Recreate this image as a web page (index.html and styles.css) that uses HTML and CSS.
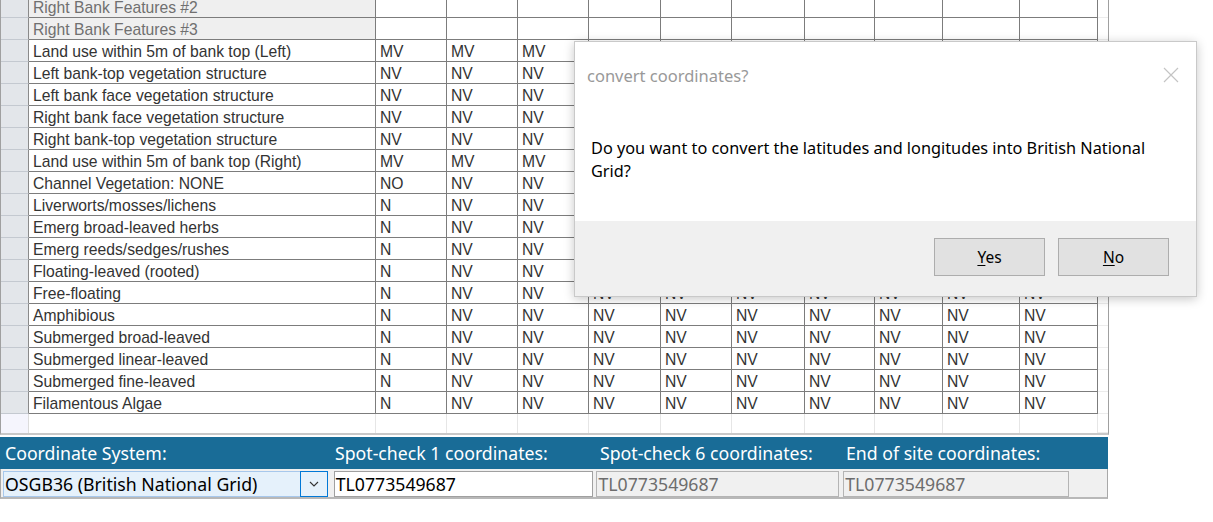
FILE: index.html
```html
<!DOCTYPE html>
<html>
<head>
<meta charset="utf-8">
<link rel="stylesheet" href="styles.css">
</head>
<body>
<div class="page">
  <div class="grid">
    <div class="row sub"><div class="rh"></div><div class="lbl">Right Bank Features #2</div><div class="c"></div><div class="c"></div><div class="c"></div><div class="c"></div><div class="c"></div><div class="c"></div><div class="c"></div><div class="c"></div><div class="c"></div><div class="c"></div><div class="f"></div></div>
    <div class="row sub"><div class="rh"></div><div class="lbl">Right Bank Features #3</div><div class="c"></div><div class="c"></div><div class="c"></div><div class="c"></div><div class="c"></div><div class="c"></div><div class="c"></div><div class="c"></div><div class="c"></div><div class="c"></div><div class="f"></div></div>
    <div class="row"><div class="rh"></div><div class="lbl">Land use within 5m of bank top (Left)</div><div class="c">MV</div><div class="c">MV</div><div class="c">MV</div><div class="c">MV</div><div class="c">MV</div><div class="c">MV</div><div class="c">MV</div><div class="c">MV</div><div class="c">MV</div><div class="c">MV</div><div class="f"></div></div>
    <div class="row"><div class="rh"></div><div class="lbl">Left bank-top vegetation structure</div><div class="c">NV</div><div class="c">NV</div><div class="c">NV</div><div class="c">NV</div><div class="c">NV</div><div class="c">NV</div><div class="c">NV</div><div class="c">NV</div><div class="c">NV</div><div class="c">NV</div><div class="f"></div></div>
    <div class="row"><div class="rh"></div><div class="lbl">Left bank face vegetation structure</div><div class="c">NV</div><div class="c">NV</div><div class="c">NV</div><div class="c">NV</div><div class="c">NV</div><div class="c">NV</div><div class="c">NV</div><div class="c">NV</div><div class="c">NV</div><div class="c">NV</div><div class="f"></div></div>
    <div class="row"><div class="rh"></div><div class="lbl">Right bank face vegetation structure</div><div class="c">NV</div><div class="c">NV</div><div class="c">NV</div><div class="c">NV</div><div class="c">NV</div><div class="c">NV</div><div class="c">NV</div><div class="c">NV</div><div class="c">NV</div><div class="c">NV</div><div class="f"></div></div>
    <div class="row"><div class="rh"></div><div class="lbl">Right bank-top vegetation structure</div><div class="c">NV</div><div class="c">NV</div><div class="c">NV</div><div class="c">NV</div><div class="c">NV</div><div class="c">NV</div><div class="c">NV</div><div class="c">NV</div><div class="c">NV</div><div class="c">NV</div><div class="f"></div></div>
    <div class="row"><div class="rh"></div><div class="lbl">Land use within 5m of bank top (Right)</div><div class="c">MV</div><div class="c">MV</div><div class="c">MV</div><div class="c">MV</div><div class="c">MV</div><div class="c">MV</div><div class="c">MV</div><div class="c">MV</div><div class="c">MV</div><div class="c">MV</div><div class="f"></div></div>
    <div class="row"><div class="rh"></div><div class="lbl">Channel Vegetation: NONE</div><div class="c">NO</div><div class="c">NV</div><div class="c">NV</div><div class="c">NV</div><div class="c">NV</div><div class="c">NV</div><div class="c">NV</div><div class="c">NV</div><div class="c">NV</div><div class="c">NV</div><div class="f"></div></div>
    <div class="row"><div class="rh"></div><div class="lbl">Liverworts/mosses/lichens</div><div class="c">N</div><div class="c">NV</div><div class="c">NV</div><div class="c">NV</div><div class="c">NV</div><div class="c">NV</div><div class="c">NV</div><div class="c">NV</div><div class="c">NV</div><div class="c">NV</div><div class="f"></div></div>
    <div class="row"><div class="rh"></div><div class="lbl">Emerg broad-leaved herbs</div><div class="c">N</div><div class="c">NV</div><div class="c">NV</div><div class="c">NV</div><div class="c">NV</div><div class="c">NV</div><div class="c">NV</div><div class="c">NV</div><div class="c">NV</div><div class="c">NV</div><div class="f"></div></div>
    <div class="row"><div class="rh"></div><div class="lbl">Emerg reeds/sedges/rushes</div><div class="c">N</div><div class="c">NV</div><div class="c">NV</div><div class="c">NV</div><div class="c">NV</div><div class="c">NV</div><div class="c">NV</div><div class="c">NV</div><div class="c">NV</div><div class="c">NV</div><div class="f"></div></div>
    <div class="row"><div class="rh"></div><div class="lbl">Floating-leaved (rooted)</div><div class="c">N</div><div class="c">NV</div><div class="c">NV</div><div class="c">NV</div><div class="c">NV</div><div class="c">NV</div><div class="c">NV</div><div class="c">NV</div><div class="c">NV</div><div class="c">NV</div><div class="f"></div></div>
    <div class="row"><div class="rh"></div><div class="lbl">Free-floating</div><div class="c">N</div><div class="c">NV</div><div class="c">NV</div><div class="c">NV</div><div class="c">NV</div><div class="c">NV</div><div class="c">NV</div><div class="c">NV</div><div class="c">NV</div><div class="c">NV</div><div class="f"></div></div>
    <div class="row"><div class="rh"></div><div class="lbl">Amphibious</div><div class="c">N</div><div class="c">NV</div><div class="c">NV</div><div class="c">NV</div><div class="c">NV</div><div class="c">NV</div><div class="c">NV</div><div class="c">NV</div><div class="c">NV</div><div class="c">NV</div><div class="f"></div></div>
    <div class="row"><div class="rh"></div><div class="lbl">Submerged broad-leaved</div><div class="c">N</div><div class="c">NV</div><div class="c">NV</div><div class="c">NV</div><div class="c">NV</div><div class="c">NV</div><div class="c">NV</div><div class="c">NV</div><div class="c">NV</div><div class="c">NV</div><div class="f"></div></div>
    <div class="row"><div class="rh"></div><div class="lbl">Submerged linear-leaved</div><div class="c">N</div><div class="c">NV</div><div class="c">NV</div><div class="c">NV</div><div class="c">NV</div><div class="c">NV</div><div class="c">NV</div><div class="c">NV</div><div class="c">NV</div><div class="c">NV</div><div class="f"></div></div>
    <div class="row"><div class="rh"></div><div class="lbl">Submerged fine-leaved</div><div class="c">N</div><div class="c">NV</div><div class="c">NV</div><div class="c">NV</div><div class="c">NV</div><div class="c">NV</div><div class="c">NV</div><div class="c">NV</div><div class="c">NV</div><div class="c">NV</div><div class="f"></div></div>
    <div class="row"><div class="rh"></div><div class="lbl">Filamentous Algae</div><div class="c">N</div><div class="c">NV</div><div class="c">NV</div><div class="c">NV</div><div class="c">NV</div><div class="c">NV</div><div class="c">NV</div><div class="c">NV</div><div class="c">NV</div><div class="c">NV</div><div class="f"></div></div>
    <div class="row newrow"><div class="rh"></div><div class="lbl"></div><div class="c"></div><div class="c"></div><div class="c"></div><div class="c"></div><div class="c"></div><div class="c"></div><div class="c"></div><div class="c"></div><div class="c"></div><div class="c"></div><div class="f"></div></div>
  </div>

  <div class="coords">
    <div class="chead">
      <div class="ch ch1">Coordinate System:</div>
      <div class="ch ch2">Spot-check 1 coordinates:</div>
      <div class="ch ch3">Spot-check 6 coordinates:</div>
      <div class="ch ch4">End of site coordinates:</div>
    </div>
    <div class="cbody">
      <div class="cc ch1">
        <div class="combo"><span class="combo-text">OSGB36 (British National Grid)</span><span class="combo-btn"><svg width="10" height="6" viewBox="0 0 10 6"><path d="M1 1 L5 5 L9 1" fill="none" stroke="#333" stroke-width="1.1"/></svg></span></div>
      </div>
      <div class="cc ch2"><div class="inp active">TL0773549687</div></div>
      <div class="cc ch3"><div class="inp">TL0773549687</div></div>
      <div class="cc ch4"><div class="inp">TL0773549687</div></div>
    </div>
  </div>

  <div class="dialog">
    <div class="dtitle"><span>convert coordinates?</span><svg class="dclose" width="16" height="16" viewBox="0 0 16 16"><path d="M1 1 L15 15 M15 1 L1 15" stroke="#c4c4c4" stroke-width="1.2" fill="none"/></svg></div>
    <div class="dbody">Do you want to convert the latitudes and longitudes into British National Grid?</div>
    <div class="dfoot">
      <div class="btn"><u>Y</u>es</div>
      <div class="btn"><u>N</u>o</div>
    </div>
  </div>
</div>
</body>
</html>
```

FILE: styles.css
```css
html, body {
  margin: 0;
  padding: 0;
  background: #ffffff;
  overflow: hidden;
}
.page {
  position: relative;
  width: 1213px;
  height: 522px;
  overflow: hidden;
}
.grid {
  margin-top: -4px;
  width: 1107px;
  border-left: 1px solid #a0a0a0;
  border-right: 1px solid #a0a0a0;
  border-bottom: 2px solid #c8c8c8;
  font-family: "Liberation Sans", Arial, sans-serif;
  font-size: 15.7px;
  color: #333333;
}
.row {
  display: grid;
  grid-template-columns: 28px 347px 71px 71px 71px 72px 71px 73px 70px 68px 77px 78px 1fr;
  height: 22px;
}
.row > div {
  box-sizing: border-box;
  height: 22px;
  border-bottom: 1px solid #7c7c7c;
  border-right: 1px solid #7c7c7c;
  line-height: 21px;
  padding-top: 1px;
  padding-left: 4px;
  white-space: nowrap;
  overflow: hidden;
}
.row > .rh {
  background: #e3e6ea;
  border-bottom: 1px solid #c4c9d0;
  border-right: 1px solid #8a8a8a;
  padding: 0;
}
.row > .f {
  border-right: none;
  border-bottom: 1px solid #ececec;
}
.row.sub > .lbl {
  background: #efefef;
  color: #707070;
}
.row.newrow {
  height: 19px;
}
.newrow > div {
  height: 19px;
  border-bottom: none;
  border-right: 1px solid #e6e6e6;
}
.newrow > .rh {
  background: #f5f5fd;
  border-right: 1px solid #dcdcdc;
  border-bottom: none;
}
.coords {
  margin-top: 2px;
  width: 1108px;
  font-family: "Noto Sans", "Open Sans", sans-serif;
  font-size: 17.7px;
}
.chead {
  display: flex;
  height: 32px;
  background: #196c97;
  color: #ffffff;
  align-items: center;
}
.ch1 { width: 330px; }
.ch2 { width: 265px; }
.ch3 { width: 246px; }
.ch4 { width: 267px; }
.ch {
  box-sizing: border-box;
  padding-left: 5px;
  line-height: 32px;
  white-space: nowrap;
}
.cbody {
  display: flex;
  height: 30px;
  background: #f0f0f0;
  border-left: 1px solid #a8a8a8;
  border-right: 1px solid #a8a8a8;
  border-bottom: 2px solid #b8b8b8;
  box-sizing: border-box;
}
.cc {
  box-sizing: border-box;
  padding: 2px 3px 0 3px;
  height: 28px;
}
.cc.ch1 { width: 329px; padding-left: 2px; padding-right: 2px; }
.cc.ch2 { padding-left: 4px; padding-right: 1px; }
.cc.ch3 { padding-left: 2px; padding-right: 1px; }
.cc.ch4 { padding-left: 3px; padding-right: 38px; }
.combo {
  display: flex;
  height: 26px;
  box-sizing: border-box;
  background: #e5f1fb;
  border: 1px solid #a7c8ec;
  color: #000;
}
.combo-text {
  flex: 1;
  padding-left: 1px;
  line-height: 24px;
  white-space: nowrap;
}
.combo-btn {
  width: 26px;
  margin: -1px -1px -1px 0;
  border: 1px solid #0078d7;
  display: flex;
  align-items: center;
  justify-content: center;
  background: #e5f1fb;
}
.inp {
  height: 26px;
  box-sizing: border-box;
  border: 1px solid #b4b4b4;
  background: #f0f0f0;
  color: #6d6d6d;
  line-height: 24px;
  padding-left: 1px;
  white-space: nowrap;
}
.inp.active {
  background: #ffffff;
  color: #000;
  border-color: #a0a0a0;
}
.dialog {
  position: absolute;
  left: 574px;
  top: 41px;
  width: 623px;
  height: 256px;
  background: #ffffff;
  border: 1px solid #c9c9c9;
  box-sizing: border-box;
  box-shadow: 0 2px 10px rgba(0,0,0,0.22);
  display: flex;
  flex-direction: column;
  font-family: "Noto Sans", "Open Sans", sans-serif;
}
.dtitle {
  display: flex;
  justify-content: space-between;
  align-items: center;
  height: 66px;
  padding: 0 17px 0 12px;
  color: #999999;
  font-size: 16.5px;
}
.dbody {
  flex: 1;
  padding: 29px 30px 0 16px;
  font-size: 16.3px;
  line-height: 23px;
  color: #000;
}
.dfoot {
  height: 75px;
  background: #f0f0f0;
  display: flex;
  justify-content: flex-end;
  align-items: flex-start;
  gap: 13px;
  padding: 17px 27px 0 0;
  box-sizing: border-box;
}
.btn {
  width: 111px;
  height: 38px;
  box-sizing: border-box;
  background: #e1e1e1;
  border: 1px solid #adadad;
  text-align: center;
  line-height: 36px;
  font-size: 15.5px;
  color: #000;
}
.btn u { text-underline-offset: 2px; }
```
